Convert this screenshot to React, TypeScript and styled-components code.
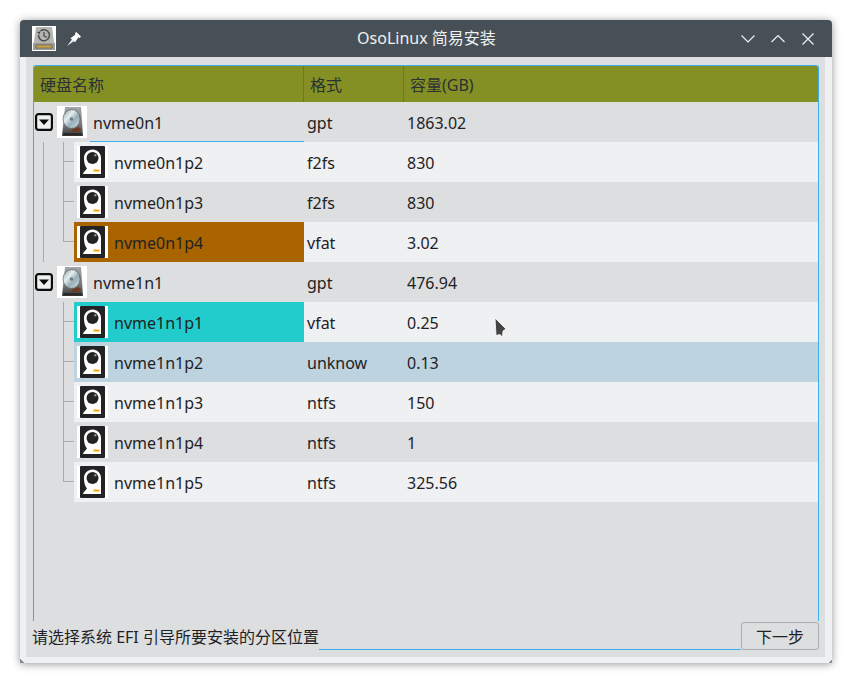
import React from 'react';
import styled, {createGlobalStyle} from "styled-components";

const GlobalStyle = createGlobalStyle`
  body {
    margin: 0;
    background: #FFFFFF;
    font-family: "Noto Sans", "Noto Sans CJK SC", sans-serif;
    font-size: 16px;
    color: #1F2225;
  }
`
const StyledPage = styled.div`
  padding: 20px;
  width: 852px;
  height: 683px;
  box-sizing: border-box;
`
const StyledWindow = styled.div`
  position: relative;
  display: flex;
  flex-direction: column;
  width: 812px;
  height: 643px;
  background-color: #EFF0F1;
  border-radius: 4px 4px 0 0;
  box-shadow: 0 1px 9px rgba(0, 0, 0, 0.42);
`
const StyledGrip = styled.div<{ $side: 'left' | 'right' }>`
  position: absolute;
  bottom: 0;
  ${p => p.$side}: 0;
  width: 4px;
  height: 4px;
  background: ${p => p.$side === 'left'
    ? 'linear-gradient(45deg, #8A8D90 50%, transparent 50%)'
    : 'linear-gradient(-45deg, #8A8D90 50%, transparent 50%)'};
`
const StyledTitleBar = styled.div`
  display: grid;
  grid-template-columns: 1fr auto 1fr;
  align-items: center;
  height: 37px;
  padding: 0 16px 0 12px;
  background-color: #475057;
  border-radius: 4px 4px 0 0;
`
const StyledTitleLeft = styled.div`
  display: flex;
  align-items: center;
  gap: 10px;
`
const StyledTitle = styled.div`
  margin-left: 5px;
  color: #EFF0F1;
  font-size: 16px;
  line-height: 37px;
`
const StyledTitleRight = styled.div`
  display: flex;
  justify-content: flex-end;
  gap: 14px;
`
const StyledPanel = styled.div`
  flex: 1;
  display: flex;
  flex-direction: column;
  margin: 0 7px 6px 6px;
  padding: 8px 6px 7px 7px;
  background-color: #DCDEE0;
`
const StyledFrame = styled.div`
  height: 556px;
  box-sizing: border-box;
  border: 1px solid #3DAEE9;
  border-bottom: none;
  border-radius: 3px 3px 0 0;
`
const StyledHeader = styled.div`
  display: grid;
  grid-template-columns: 270px 100px 1fr;
  height: 36px;
  background-color: #859024;
  border-radius: 2px 2px 0 0;
`
const StyledHeaderCell = styled.div`
  display: flex;
  align-items: center;
  padding-left: 6px;
  color: #2B3034;
  border-right: 1px solid #717B1E;
  &:last-child {
    border-right: none;
  }
`
const StyledRow = styled.div`
  display: grid;
  grid-template-columns: 270px 100px 1fr;
  height: 40px;
`
const StyledNameWrap = styled.div`
  position: relative;
  display: flex;
  min-width: 0;
`
const StyledFocusLine = styled.div`
  position: absolute;
  left: 56px;
  right: 0;
  bottom: 0;
  height: 1px;
  background-color: #3DAEE9;
`
const StyledIndent = styled.div`
  display: flex;
  flex: 0 0 40px;
`
const StyledGuide = styled.div<{ $line: 'none' | 'through' | 'end'; $branch?: boolean }>`
  position: relative;
  width: 20px;
  &::before {
    content: "";
    display: ${p => p.$line === 'none' ? 'none' : 'block'};
    position: absolute;
    left: 9px;
    top: 0;
    width: 1px;
    height: ${p => p.$line === 'end' ? '20px' : '40px'};
    background-color: #A9AAAB;
  }
  &::after {
    content: "";
    display: ${p => p.$branch ? 'block' : 'none'};
    position: absolute;
    left: 9px;
    top: 19px;
    width: 11px;
    height: 1px;
    background-color: #A9AAAB;
  }
`
const StyledNameCell = styled.div<{ $bg: string }>`
  flex: 1;
  display: flex;
  align-items: center;
  gap: 6px;
  padding-left: 3px;
  background-color: ${p => p.$bg};
`
const StyledDiskCell = styled.div`
  flex: 1;
  display: flex;
  align-items: center;
  gap: 4px;
  padding-left: 1px;
`
const StyledName = styled.span<{ $disk?: boolean }>`
  margin-top: 2px;
  margin-left: ${p => p.$disk ? '2px' : '0'};
`
const StyledCell = styled.div<{ $bg: string }>`
  display: flex;
  align-items: center;
  padding: 2px 0 0 3px;
  background-color: ${p => p.$bg};
`
const StyledFooter = styled.div`
  display: flex;
  height: 29px;
`
const StyledHint = styled.div`
  display: flex;
  align-items: center;
  white-space: nowrap;
  height: 29px;
  margin-left: -1px;
`
const StyledFooterLine = styled.div`
  flex: 1;
  height: 28px;
  border-bottom: 1px solid #3DAEE9;
`
const StyledButton = styled.button`
  width: 78px;
  height: 28px;
  margin-top: 1px;
  padding: 0;
  background-color: #DCDEE0;
  border: 1px solid #A9ABAD;
  border-radius: 3px;
  font: inherit;
  color: #1F2225;
`
const StyledCursor = styled.svg`
  position: absolute;
  left: 473px;
  top: 296px;
`

const DARK = '#DCDEE0'
const LIGHT = '#EFF0F1'

const AppIcon = () => (
  <svg width="24" height="25" viewBox="0 0 24 25">
    <rect width="24" height="25" fill="#fff"/>
    <path d="M4 1h16l3 22H1z" fill="#B4B5B1"/>
    <rect x="1" y="17" width="22" height="7" fill="#9D9E9A"/>
    <rect x="4" y="19" width="16" height="3" fill="#C9A850" stroke="#4A4536" strokeWidth=".6"/>
    <path d="M6.5 9a5.5 5.5 0 1 0 2-4" fill="none" stroke="#45464A" strokeWidth="1.4"/>
    <path d="M12 6v4l3 1.5" fill="none" stroke="#45464A" strokeWidth="1.2"/>
    <path d="M5 6l3.5-.5-1 3z" fill="#45464A"/>
  </svg>
)

const PinIcon = () => (
  <svg width="16" height="16" viewBox="0 0 16 16">
    <path d="M1 15l5-6.5L8 10z" fill="#EFF0F1"/>
    <path d="M4.5 7.2l5-3.7-.6-1L10.3 1l4.7 4.6-1.400 1.400-1-.7-3.600 5z" fill="#fff"/>
  </svg>
)

const WindowButton = ({d}: { d: string }) => (
  <svg width="16" height="16" viewBox="0 0 16 16">
    <path d={d} fill="none" stroke="#EFF0F1" strokeWidth="1.200"/>
  </svg>
)

const Expander = () => (
  <svg width="18" height="18" viewBox="0 0 18 18">
    <rect x="1.100" y="1.100" width="15.800" height="15.800" rx="2.500" fill="#EFF0F1" stroke="#0C0C0C" strokeWidth="2.200"/>
    <path d="M4 6.500h10L9 12z" fill="#0C0C0C"/>
  </svg>
)

const HddIcon = () => (
  <svg width="30" height="32" viewBox="0 0 30 32">
    <defs>
      <linearGradient id="hddBody" x1="0" y1="0" x2="0" y2="1">
        <stop offset="0" stopColor="#A6A6A6"/>
        <stop offset="0.6" stopColor="#77787A"/>
        <stop offset="1" stopColor="#3A3A38"/>
      </linearGradient>
      <linearGradient id="hddDisc" x1="0" y1="0" x2="1" y2="1">
        <stop offset="0" stopColor="#7F949E"/>
        <stop offset="0.35" stopColor="#E6EDF0"/>
        <stop offset="0.6" stopColor="#98AEB8"/>
        <stop offset="1" stopColor="#D8E0E3"/>
      </linearGradient>
    </defs>
    <rect width="30" height="32" fill="#fff"/>
    <path d="M8 1h16l2 29H5z" fill="url(#hddBody)"/>
    <ellipse cx="14.500" cy="13" rx="8.500" ry="9.500" fill="url(#hddDisc)" stroke="#4E5458" strokeWidth=".6"/>
    <circle cx="14.500" cy="13" r="1.800" fill="#6F8088"/>
    <path d="M14 24l7-3 3 2-3 3h-6z" fill="#6B3C22"/>
    <rect x="6.500" y="27" width="18" height="2.500" fill="#2A2A28"/>
  </svg>
)

const PartIcon = () => (
  <svg width="31" height="32" viewBox="0 0 31 32">
    <rect width="31" height="32" fill="#fff"/>
    <rect x="3" y="0" width="25" height="32" rx="1" fill="#232325"/>
    <path d="M15.500 3.500c4.800 0 8.500 3.800 8.500 8.500V28H6c0-1.500 2.500-3.500 4-5.500C8.200 20.500 7 17 7 12 7 7.300 10.800 3.500 15.500 3.500z" fill="#fff"/>
    <circle cx="15.500" cy="12" r="6" fill="#232325"/>
    <circle cx="18.300" cy="9.300" r="1.200" fill="#8F9092"/>
    <rect x="16.500" y="23.500" width="6" height="2" fill="#F5A30C"/>
  </svg>
)

type Part = { name: string, format: string, size: string, tone: string, nameBg?: string, outer: boolean, inner: 'through' | 'end' }
type Disk = { name: string, format: string, size: string, focused?: boolean, parts: Part[] }

const disks: Disk[] = [
  {
    name: 'nvme0n1', format: 'gpt', size: '1863.02', focused: true, parts: [
      {name: 'nvme0n1p2', format: 'f2fs', size: '830', tone: LIGHT, outer: true, inner: 'through'},
      {name: 'nvme0n1p3', format: 'f2fs', size: '830', tone: DARK, outer: true, inner: 'through'},
      {name: 'nvme0n1p4', format: 'vfat', size: '3.02', tone: LIGHT, nameBg: '#A96400', outer: true, inner: 'end'},
    ]
  },
  {
    name: 'nvme1n1', format: 'gpt', size: '476.94', parts: [
      {name: 'nvme1n1p1', format: 'vfat', size: '0.25', tone: LIGHT, nameBg: '#22CCCC', outer: false, inner: 'through'},
      {name: 'nvme1n1p2', format: 'unknow', size: '0.13', tone: '#BDD3E0', outer: false, inner: 'through'},
      {name: 'nvme1n1p3', format: 'ntfs', size: '150', tone: LIGHT, outer: false, inner: 'through'},
      {name: 'nvme1n1p4', format: 'ntfs', size: '1', tone: DARK, outer: false, inner: 'through'},
      {name: 'nvme1n1p5', format: 'ntfs', size: '325.56', tone: LIGHT, outer: false, inner: 'end'},
    ]
  },
]

export default function App() {
  return <StyledPage>
    <GlobalStyle/>
    <StyledWindow>
      <StyledTitleBar>
        <StyledTitleLeft>
          <AppIcon/>
          <PinIcon/>
        </StyledTitleLeft>
        <StyledTitle>OsoLinux 简易安装</StyledTitle>
        <StyledTitleRight>
          <WindowButton d="M1.500 4.500 8 11l6.500-6.500"/>
          <WindowButton d="M1.500 11 8 4.500 14.500 11"/>
          <WindowButton d="M2.500 2.500l11 11M13.500 2.500l-11 11"/>
        </StyledTitleRight>
      </StyledTitleBar>

      <StyledPanel>
        <StyledFrame>
          <StyledHeader>
            <StyledHeaderCell>硬盘名称</StyledHeaderCell>
            <StyledHeaderCell>格式</StyledHeaderCell>
            <StyledHeaderCell>容量(GB)</StyledHeaderCell>
          </StyledHeader>

          {disks.map(disk => <React.Fragment key={disk.name}>
            <StyledRow>
              <StyledNameWrap>
                <StyledDiskCell>
                  <Expander/>
                  <HddIcon/>
                  <StyledName $disk>{disk.name}</StyledName>
                </StyledDiskCell>
                {disk.focused && <StyledFocusLine/>}
              </StyledNameWrap>
              <StyledCell $bg={DARK}>{disk.format}</StyledCell>
              <StyledCell $bg={DARK}>{disk.size}</StyledCell>
            </StyledRow>

            {disk.parts.map(part => <StyledRow key={part.name}>
              <StyledNameWrap>
                <StyledIndent>
                  <StyledGuide $line={part.outer ? 'through' : 'none'}/>
                  <StyledGuide $line={part.inner} $branch/>
                </StyledIndent>
                <StyledNameCell $bg={part.nameBg || part.tone}>
                  <PartIcon/>
                  <StyledName>{part.name}</StyledName>
                </StyledNameCell>
              </StyledNameWrap>
              <StyledCell $bg={part.tone}>{part.format}</StyledCell>
              <StyledCell $bg={part.tone}>{part.size}</StyledCell>
            </StyledRow>)}
          </React.Fragment>)}
        </StyledFrame>

        <StyledFooter>
          <StyledHint>请选择系统 EFI 引导所要安装的分区位置</StyledHint>
          <StyledFooterLine/>
          <StyledButton>下一步</StyledButton>
        </StyledFooter>
      </StyledPanel>

      <StyledGrip $side="left"/>
      <StyledGrip $side="right"/>

      <StyledCursor width="16" height="24" viewBox="0 0 16 24">
        <path d="M2 2L13 13L10 15L9.500 21L7 18.500L3 19.500z" fill="#444" stroke="#fff" strokeWidth=".8"/>
      </StyledCursor>
    </StyledWindow>
  </StyledPage>
}
